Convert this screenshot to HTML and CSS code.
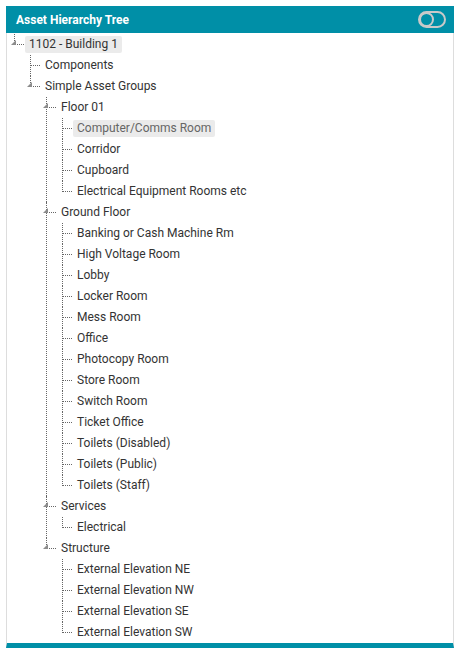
FILE: index.html
```html
<!DOCTYPE html>
<html lang="en">
<head>
  <meta charset="UTF-8" />
  <meta name="viewport" content="width=device-width, initial-scale=1.0"/>
  <title>Asset Hierarchy Tree</title>
<link rel="stylesheet" href="styles.css">
</head>
<body>
  <div class="panel">
    <div class="panel-head">
      <span class="panel-title">Asset Hierarchy Tree</span>
      <svg class="toggle" width="28" height="17" viewBox="0 0 28 17">
        <rect x="1" y="1" width="26" height="15" rx="7.5" fill="none" stroke="#c9c9c9" stroke-width="2"/>
        <circle cx="8.5" cy="8.5" r="6.5" fill="none" stroke="#c9c9c9" stroke-width="2"/>
      </svg>
    </div>

    <ul class="tree">
      <li class="open last">
        <div class="row"><span class="exp"></span><span class="node sel">1102 - Building 1</span></div>
        <ul>
          <li><div class="row"><span class="node">Components</span></div></li>
          <li class="open last">
            <div class="row"><span class="exp"></span><span class="node">Simple Asset Groups</span></div>
            <ul>
              <li class="open">
                <div class="row"><span class="exp"></span><span class="node">Floor 01</span></div>
                <ul>
                  <li><div class="row"><span class="node sel dim">Computer/Comms Room</span></div></li>
                  <li><div class="row"><span class="node">Corridor</span></div></li>
                  <li><div class="row"><span class="node">Cupboard</span></div></li>
                  <li class="last"><div class="row"><span class="node">Electrical Equipment Rooms etc</span></div></li>
                </ul>
              </li>
              <li class="open">
                <div class="row"><span class="exp"></span><span class="node">Ground Floor</span></div>
                <ul>
                  <li><div class="row"><span class="node">Banking or Cash Machine Rm</span></div></li>
                  <li><div class="row"><span class="node">High Voltage Room</span></div></li>
                  <li><div class="row"><span class="node">Lobby</span></div></li>
                  <li><div class="row"><span class="node">Locker Room</span></div></li>
                  <li><div class="row"><span class="node">Mess Room</span></div></li>
                  <li><div class="row"><span class="node">Office</span></div></li>
                  <li><div class="row"><span class="node">Photocopy Room</span></div></li>
                  <li><div class="row"><span class="node">Store Room</span></div></li>
                  <li><div class="row"><span class="node">Switch Room</span></div></li>
                  <li><div class="row"><span class="node">Ticket Office</span></div></li>
                  <li><div class="row"><span class="node">Toilets (Disabled)</span></div></li>
                  <li><div class="row"><span class="node">Toilets (Public)</span></div></li>
                  <li class="last"><div class="row"><span class="node">Toilets (Staff)</span></div></li>
                </ul>
              </li>
              <li class="open">
                <div class="row"><span class="exp"></span><span class="node">Services</span></div>
                <ul>
                  <li class="last"><div class="row"><span class="node">Electrical</span></div></li>
                </ul>
              </li>
              <li class="open last">
                <div class="row"><span class="exp"></span><span class="node">Structure</span></div>
                <ul>
                  <li><div class="row"><span class="node">External Elevation NE</span></div></li>
                  <li><div class="row"><span class="node">External Elevation NW</span></div></li>
                  <li><div class="row"><span class="node">External Elevation SE</span></div></li>
                  <li class="last"><div class="row"><span class="node">External Elevation SW</span></div></li>
                </ul>
              </li>
            </ul>
          </li>
        </ul>
      </li>
    </ul>
  </div>
</body>
</html>
```

FILE: styles.css
```css
body {
  margin: 0;
  padding: 6px;
  background: #fff;
  font-family: Roboto, "Liberation Sans", sans-serif;
  font-size: 12px;
  color: #333;
}
.panel {
  width: 446px;
  border-left: 1px solid #ddd;
  border-right: 1px solid #ddd;
  border-bottom: 5px solid #008fa7;
}
.panel-head {
  height: 27px;
  margin: 0 -1px;
  padding: 0 8px 0 10px;
  background: #008fa7;
  display: flex;
  align-items: center;
  justify-content: space-between;
}
.panel-title {
  color: #fff;
  font-weight: bold;
  font-size: 12px;
}
.toggle {
  display: block;
}
.tree, .tree ul {
  list-style: none;
  margin: 0;
  padding: 0 0 0 16px;
}
.tree {
  padding: 0 0 0 7px;
  margin-top: 1px;
}
.tree li {
  position: relative;
}
/* vertical trunk */
.tree li::before {
  content: "";
  position: absolute;
  left: 0;
  top: 0;
  bottom: 0;
  border-left: 1px dotted #666;
}
.tree li.last::before {
  bottom: auto;
  height: 11px;
}
/* horizontal connector */
.tree li::after {
  content: "";
  position: absolute;
  left: 1px;
  top: 10px;
  width: 9px;
  border-top: 1px dotted #666;
}
.row {
  height: 21px;
  display: flex;
  align-items: center;
}
.node {
  height: 17px;
  line-height: 17px;
  margin-left: 11px;
  padding: 0 4px;
  border-radius: 2px;
  white-space: nowrap;
}
.node.sel {
  background: #ebebeb;
}
.node.dim {
  color: #666;
}
.exp {
  position: absolute;
  left: -3px;
  top: 6px;
  width: 0;
  height: 0;
  border-left: 5px solid transparent;
  border-bottom: 5px solid #8c8c8c;
  z-index: 1;
}
```
